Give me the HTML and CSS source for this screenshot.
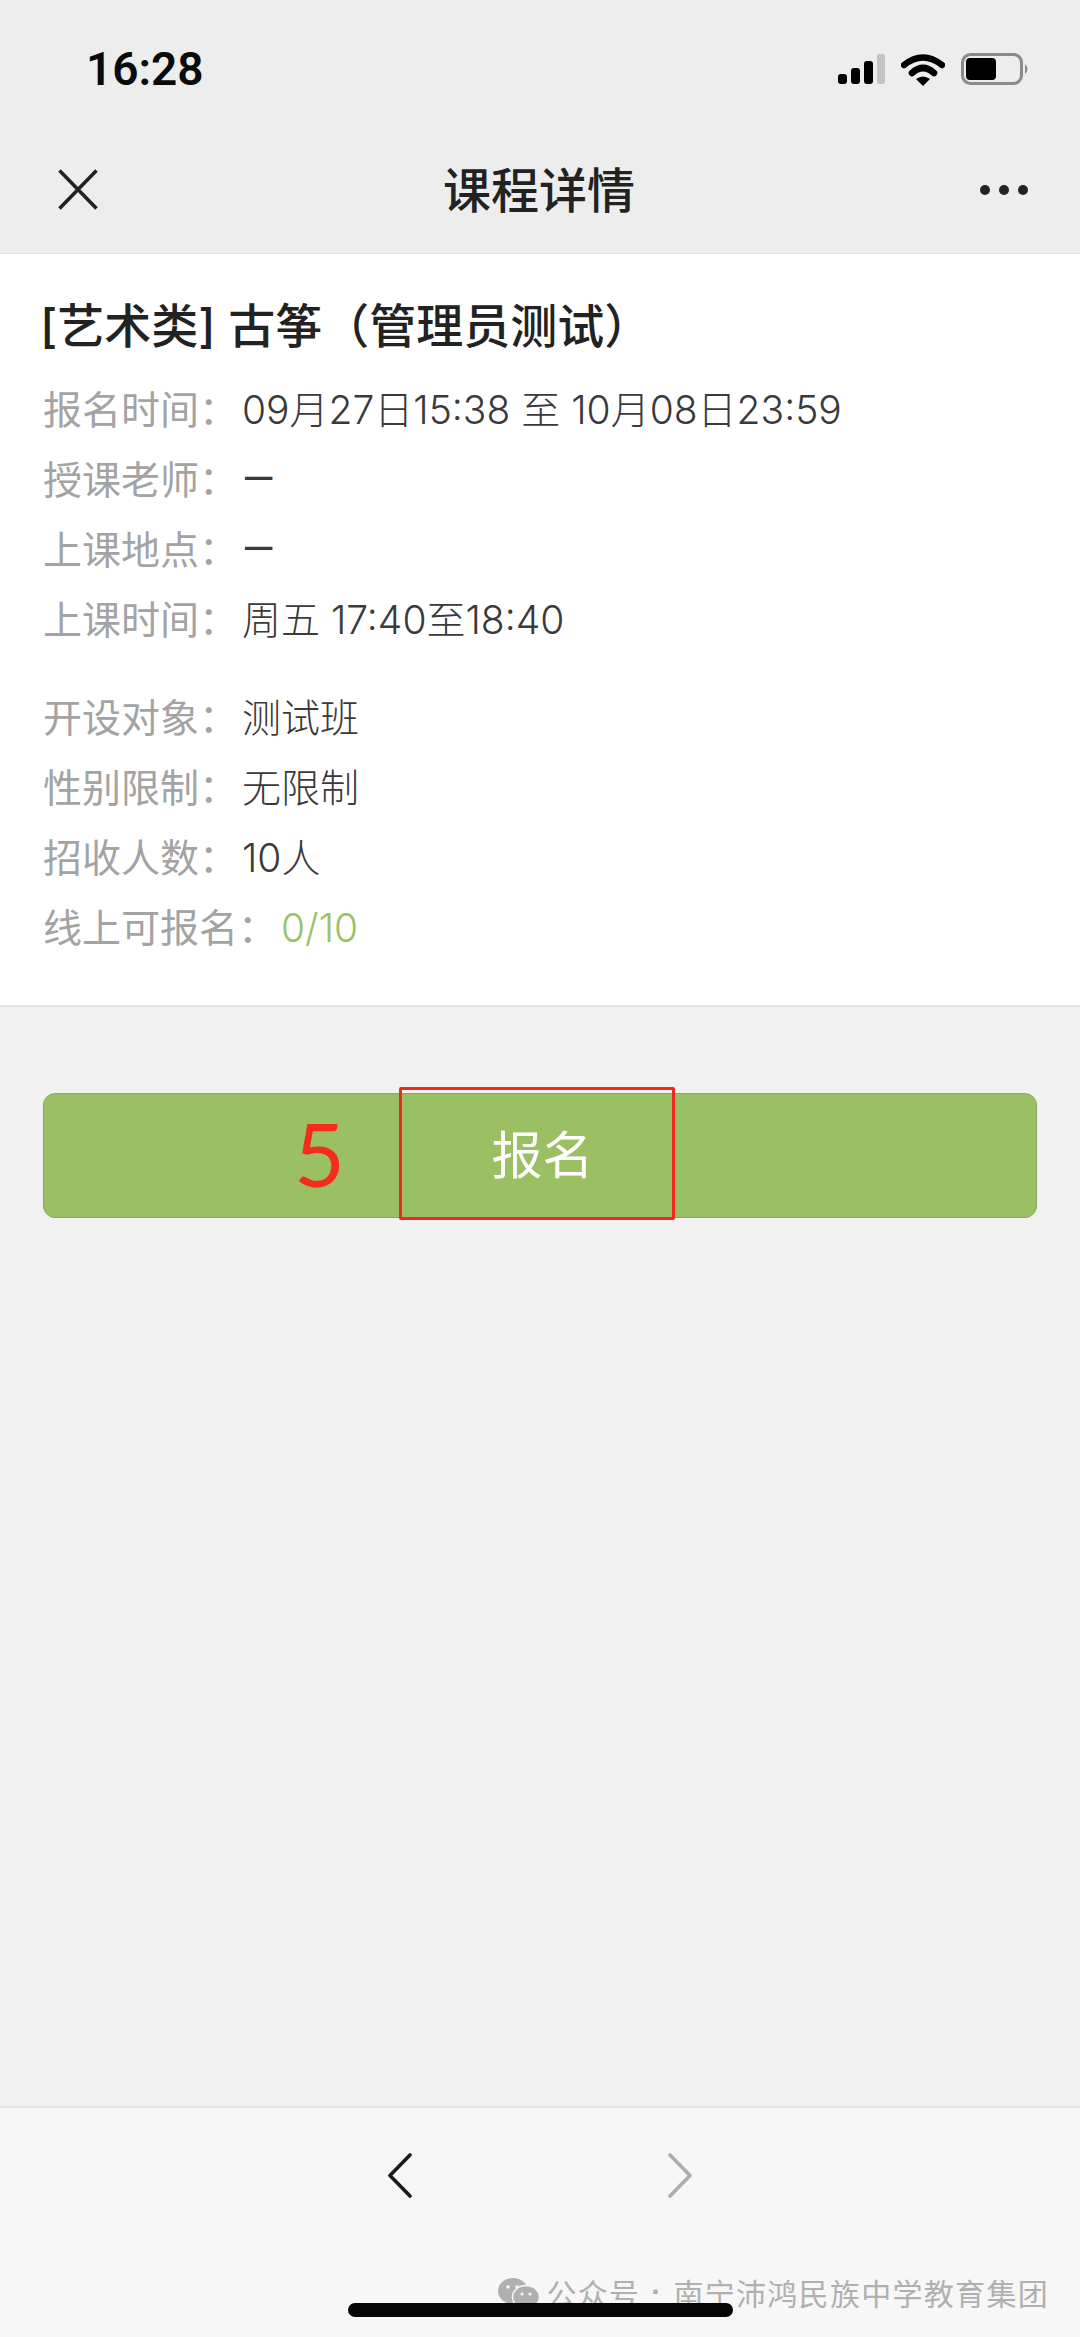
FILE: index.html
```html
<!DOCTYPE html>
<html lang="zh-CN">
<head>
<meta charset="utf-8">
<title>课程详情</title>
<link rel="stylesheet" href="styles.css">
</head>
<body>
<div class="page">
  <header class="header">
    <div class="status">
      <span class="time">16:28</span>
      <div class="status-icons">
        <svg class="signal" width="47" height="30" viewBox="0 0 47 30"><rect x="0" y="20" width="9" height="10" rx="3" fill="#000"/><rect x="13" y="14" width="9" height="16" rx="3" fill="#000"/><rect x="26" y="7" width="9" height="23" rx="3" fill="#000"/><rect x="39" y="0" width="8" height="30" rx="2" fill="#c4c4c4"/></svg>
        <svg class="wifi" width="44" height="33" viewBox="0 0 44 33"><path d="M3 12Q22 -3 41 12" fill="none" stroke="#000" stroke-width="6.5" stroke-linecap="round"/><path d="M11 20Q22 10 33 20" fill="none" stroke="#000" stroke-width="6.5" stroke-linecap="round"/><path d="M15 26Q22 21 29 26L22 33Z" fill="#000"/></svg>
        <svg class="battery" width="69" height="32" viewBox="0 0 69 32"><rect x="1.5" y="1.5" width="59" height="29" rx="8" fill="none" stroke="#8a8a8a" stroke-width="3"/><rect x="5" y="5" width="30" height="22" rx="4" fill="#000"/><path d="M64 11Q69 16 64 21Z" fill="#8a8a8a"/></svg>
      </div>
    </div>
    <nav class="nav">
      <svg class="close" width="40" height="41" viewBox="0 0 40 41"><path d="M1.5 1.5L38.5 39.5M38.5 1.5L1.5 39.5" stroke="#222" stroke-width="3.6" fill="none"/></svg>
      <h1 class="nav-title">课程详情</h1>
      <div class="dots"><i></i><i></i><i></i></div>
    </nav>
  </header>

  <section class="course">
    <h2 class="course-title">[艺术类] 古筝（管理员测试）</h2>
    <div class="group">
      <div class="row"><span class="label">报名时间：</span><span class="value">09月27日15:38 至 10月08日23:59</span></div>
      <div class="row"><span class="label">授课老师：</span><span class="value dash">—</span></div>
      <div class="row"><span class="label">上课地点：</span><span class="value dash">—</span></div>
      <div class="row"><span class="label">上课时间：</span><span class="value">周五 17:40至18:40</span></div>
    </div>
    <div class="group">
      <div class="row"><span class="label">开设对象：</span><span class="value">测试班</span></div>
      <div class="row"><span class="label">性别限制：</span><span class="value">无限制</span></div>
      <div class="row"><span class="label">招收人数：</span><span class="value">10人</span></div>
      <div class="row"><span class="label">线上可报名：</span><span class="value green">0/10</span></div>
    </div>
  </section>

  <div class="action">
    <button class="signup">报名</button>
    <span class="mark-num">5</span>
    <span class="mark-box"></span>
  </div>

  <footer class="toolbar">
    <div class="arrows">
      <svg width="24" height="45" viewBox="0 0 24 45"><path d="M22 2L2 22.5L22 43" fill="none" stroke="#1a1a1a" stroke-width="3.6" stroke-linecap="round" stroke-linejoin="round"/></svg>
      <svg width="24" height="45" viewBox="0 0 24 45"><path d="M2 2L22 22.5L2 43" fill="none" stroke="#adadad" stroke-width="3.6" stroke-linecap="round" stroke-linejoin="round"/></svg>
    </div>
    <div class="watermark">
      <svg class="wm-icon" width="42" height="28" viewBox="0 0 42 28"><ellipse cx="15" cy="13" rx="15" ry="13" fill="#b0b0b0"/><circle cx="10" cy="9" r="1.8" fill="#f7f7f7"/><circle cx="19" cy="9" r="1.8" fill="#f7f7f7"/><ellipse cx="28" cy="19" rx="13.5" ry="11.5" fill="#b0b0b0" stroke="#f7f7f7" stroke-width="1.5"/><circle cx="24" cy="16" r="1.6" fill="#f7f7f7"/><circle cx="32" cy="16" r="1.6" fill="#f7f7f7"/></svg>
      <span>公众号</span>
      <span class="sep">·</span>
      <span>南宁沛鸿民族中学教育集团</span>
    </div>
    <div class="home-bar"></div>
  </footer>
</div>
</body>
</html>
```
FILE: styles.css
```css
* { box-sizing: border-box; }
html, body { margin: 0; padding: 0; }
body {
  font-family: Inter, "Noto Sans CJK SC", sans-serif;
  background: #f1f1f1;
}
.page {
  width: 1080px;
  height: 2337px;
  display: flex;
  flex-direction: column;
  position: relative;
  overflow: hidden;
}
.header {
  background: #ededed;
  height: 254px;
  border-bottom: 1px solid #e2e2e2;
  display: flex;
  flex-direction: column;
  flex: none;
}
.status {
  height: 126px;
  padding: 12px 50px 0 86px;
  display: flex;
  align-items: center;
  justify-content: space-between;
}
.time {
  font-family: Roboto, sans-serif;
  font-size: 46px;
  font-weight: 600;
  color: #0a0a0a;
}
.status-icons {
  display: flex;
  align-items: center;
  gap: 16px;
}
.nav {
  flex: 1;
  display: flex;
  align-items: center;
  justify-content: space-between;
  padding: 0 52px 0 58px;
}
.nav-title {
  margin: 0 0 5px;
  font-family: "Noto Sans CJK SC", sans-serif;
  font-size: 48px;
  font-weight: 500;
  color: #222;
  line-height: 1;
}
.dots { display: flex; gap: 9px; }
.dots i {
  width: 10px;
  height: 10px;
  border-radius: 50%;
  background: #222;
}
.course {
  background: #fff;
  flex: none;
  height: 753px;
  padding: 37px 40px 0 43px;
  border-bottom: 2px solid #e4e4e4;
}
.course-title {
  margin: 0 0 14px -3px;
  font-size: 47px;
  font-weight: 500;
  line-height: 70px;
  color: #222;
}
.group + .group { margin-top: 28px; }
.row {
  height: 70px;
  display: flex;
  align-items: center;
  font-size: 39px;
  line-height: 70px;
  font-weight: 300;
}
.label { color: #a3a3a3; font-weight: 400; }
.value { color: #3a3a3a; margin-left: 4px; }
.dash { font-family: Roboto, sans-serif; font-size: 42px; font-weight: 400; }
.green { color: #9cc165; }
.action {
  position: relative;
  flex: none;
  margin: 86px 43px 0;
}
.signup {
  display: block;
  width: 994px;
  height: 125px;
  border: 1px solid #86ab58;
  border-radius: 12px;
  background: #9bc063;
  color: #fff;
  font-family: "Noto Sans CJK SC", sans-serif;
  font-size: 51px;
  font-weight: 400;
  padding: 0 0 8px 5px;
}
.mark-num {
  position: absolute;
  left: 251px;
  top: -2px;
  font-family: Lato, sans-serif;
  font-size: 88px;
  line-height: 124px;
  color: #f52c1c;
}
.mark-box {
  position: absolute;
  left: 356px;
  top: -6px;
  width: 276px;
  height: 133px;
  border: 3px solid #ee2a1f;
  border-radius: 2px;
}
.toolbar {
  margin-top: auto;
  height: 231px;
  flex: none;
  background: #f7f7f7;
  border-top: 2px solid #e2e2e2;
  position: relative;
}
.arrows {
  display: flex;
  justify-content: center;
  gap: 256px;
  padding-top: 45px;
}
.watermark {
  position: absolute;
  right: 31px;
  top: 168px;
  display: flex;
  align-items: center;
  gap: 10px;
  font-family: "Noto Sans CJK SC", sans-serif;
  font-size: 30px;
  letter-spacing: 1.3px;
  line-height: 32px;
  color: #b0b0b0;
}
.wm-icon { margin-right: -4px; }
.sep {
  font-family: "Liberation Sans", sans-serif;
  width: 13px;
  text-align: center;
  font-weight: 700;
}
.home-bar {
  position: absolute;
  left: 348px;
  top: 195px;
  width: 385px;
  height: 14px;
  border-radius: 7px;
  background: #050505;
}
```
